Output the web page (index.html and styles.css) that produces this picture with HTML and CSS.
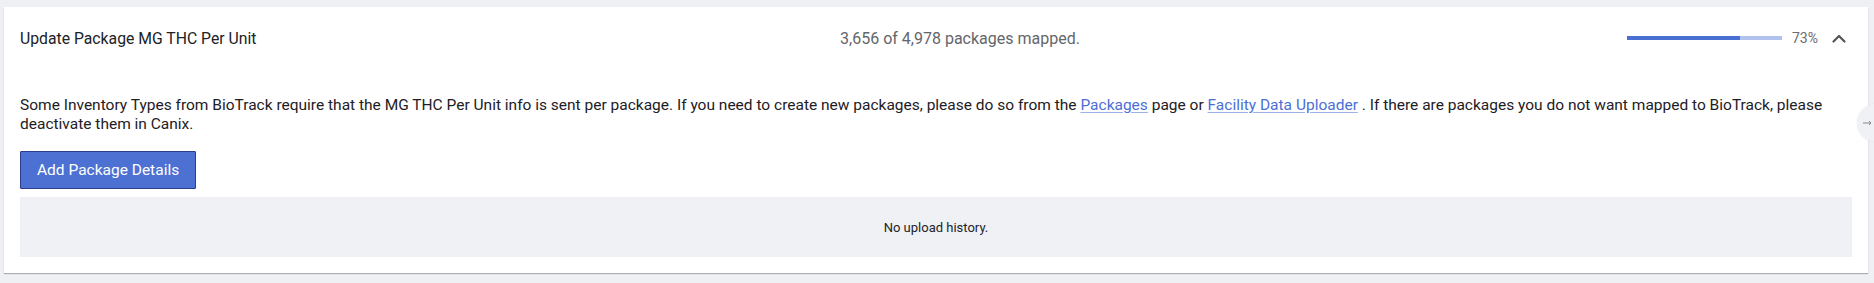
FILE: index.html
```html
<!DOCTYPE html>
<html lang="en">
<head>
<meta charset="utf-8">
<title>Update Package MG THC Per Unit</title>
<link rel="stylesheet" href="styles.css">
</head>
<body>
<div class="page">
  <section class="card">
    <header class="card-header">
      <div class="title">Update Package MG THC Per Unit</div>
      <div class="summary">3,656 of 4,978 packages mapped.</div>
      <div class="status">
        <div class="progress"><div class="progress-fill" style="width:73%"></div></div>
        <span class="percent">73%</span>
        <button class="toggle" aria-label="Collapse">
          <svg width="14" height="9" viewBox="0 0 14 9"><polyline points="1.5,7.5 7,2 12.5,7.5" fill="none" stroke="#555" stroke-width="2.2" stroke-linecap="round" stroke-linejoin="round"/></svg>
        </button>
      </div>
    </header>
    <div class="card-body">
      <p class="description">Some Inventory Types from BioTrack require that the MG THC Per Unit info is sent per package. If you need to create new packages, please do so from the <a href="#">Packages</a> page or <a href="#">Facility Data Uploader</a> . If there are packages you do not want mapped to BioTrack, please deactivate them in Canix.</p>
      <button class="primary-btn">Add Package Details</button>
      <div class="history">No upload history.</div>
    </div>
  </section>
</div>
<button class="side-handle" aria-label="Open">
  <svg width="10" height="6" viewBox="0 0 10 6"><path d="M0 3 H8 M6 1 L8 3 L6 5" fill="none" stroke="#888" stroke-width="1"/></svg>
</button>
</body>
</html>
```

FILE: styles.css
```css
* { box-sizing: border-box; }
html, body { margin: 0; padding: 0; }
body {
  background: #eff0f4;
  font-family: Roboto, Inter, "Liberation Sans", sans-serif;
  color: #1e2025;
  overflow: hidden;
}
.page {
  padding: 7px 6px 10px 4px;
}
.card {
  background: #ffffff;
  box-shadow: 0 1px 1px rgba(0, 0, 0, 0.28);
  padding: 0 16px 16px 16px;
}
.card-header {
  height: 62px;
  display: grid;
  grid-template-columns: 1fr auto 1fr;
  align-items: center;
}
.title {
  font-size: 15.75px;
  line-height: 19px;
  color: #202226;
}
.summary {
  font-size: 16px;
  line-height: 19px;
  color: #64666b;
  margin-left: 48px;
}
.status {
  display: flex;
  align-items: center;
  justify-content: flex-end;
}
.progress {
  width: 155px;
  height: 4px;
  background: #b2c2ee;
}
.progress-fill {
  height: 100%;
  background: #4a6fd3;
}
.percent {
  font-size: 14px;
  color: #6a6c70;
  margin-left: 10px;
}
.toggle {
  border: 0;
  background: transparent;
  padding: 0;
  margin: 0 6px 0 14px;
  width: 14px;
  height: 14px;
  display: flex;
  align-items: center;
  justify-content: center;
}
.card-body {
  padding-top: 27px;
}
.description {
  margin: 0;
  font-size: 15.5px;
  line-height: 19.2px;
  color: #1e2025;
}
.description a {
  color: #4c6fd6;
  text-decoration: underline;
  text-decoration-color: #9fb1e6;
  text-underline-offset: 2px;
}
.primary-btn {
  margin-top: 17px;
  height: 38px;
  padding: 0 16px;
  background: #4d70d3;
  border: 1px solid #2c3d8b;
  border-radius: 1px;
  color: #ffffff;
  font-family: Roboto, Inter, "Liberation Sans", sans-serif;
  font-size: 15.5px;
  display: block;
}
.history {
  margin-top: 8px;
  height: 60px;
  background: #f0f1f5;
  display: flex;
  align-items: center;
  justify-content: center;
  font-size: 13px;
  color: #222428;
}
.side-handle {
  position: fixed;
  top: 104px;
  right: -21px;
  width: 38px;
  height: 38px;
  border-radius: 50%;
  border: 0;
  background: #f0f1f4;
  box-shadow: 0 0 2px rgba(0, 0, 0, 0.08);
  padding: 0 0 0 6px;
  display: flex;
  align-items: center;
  justify-content: flex-start;
}
```
